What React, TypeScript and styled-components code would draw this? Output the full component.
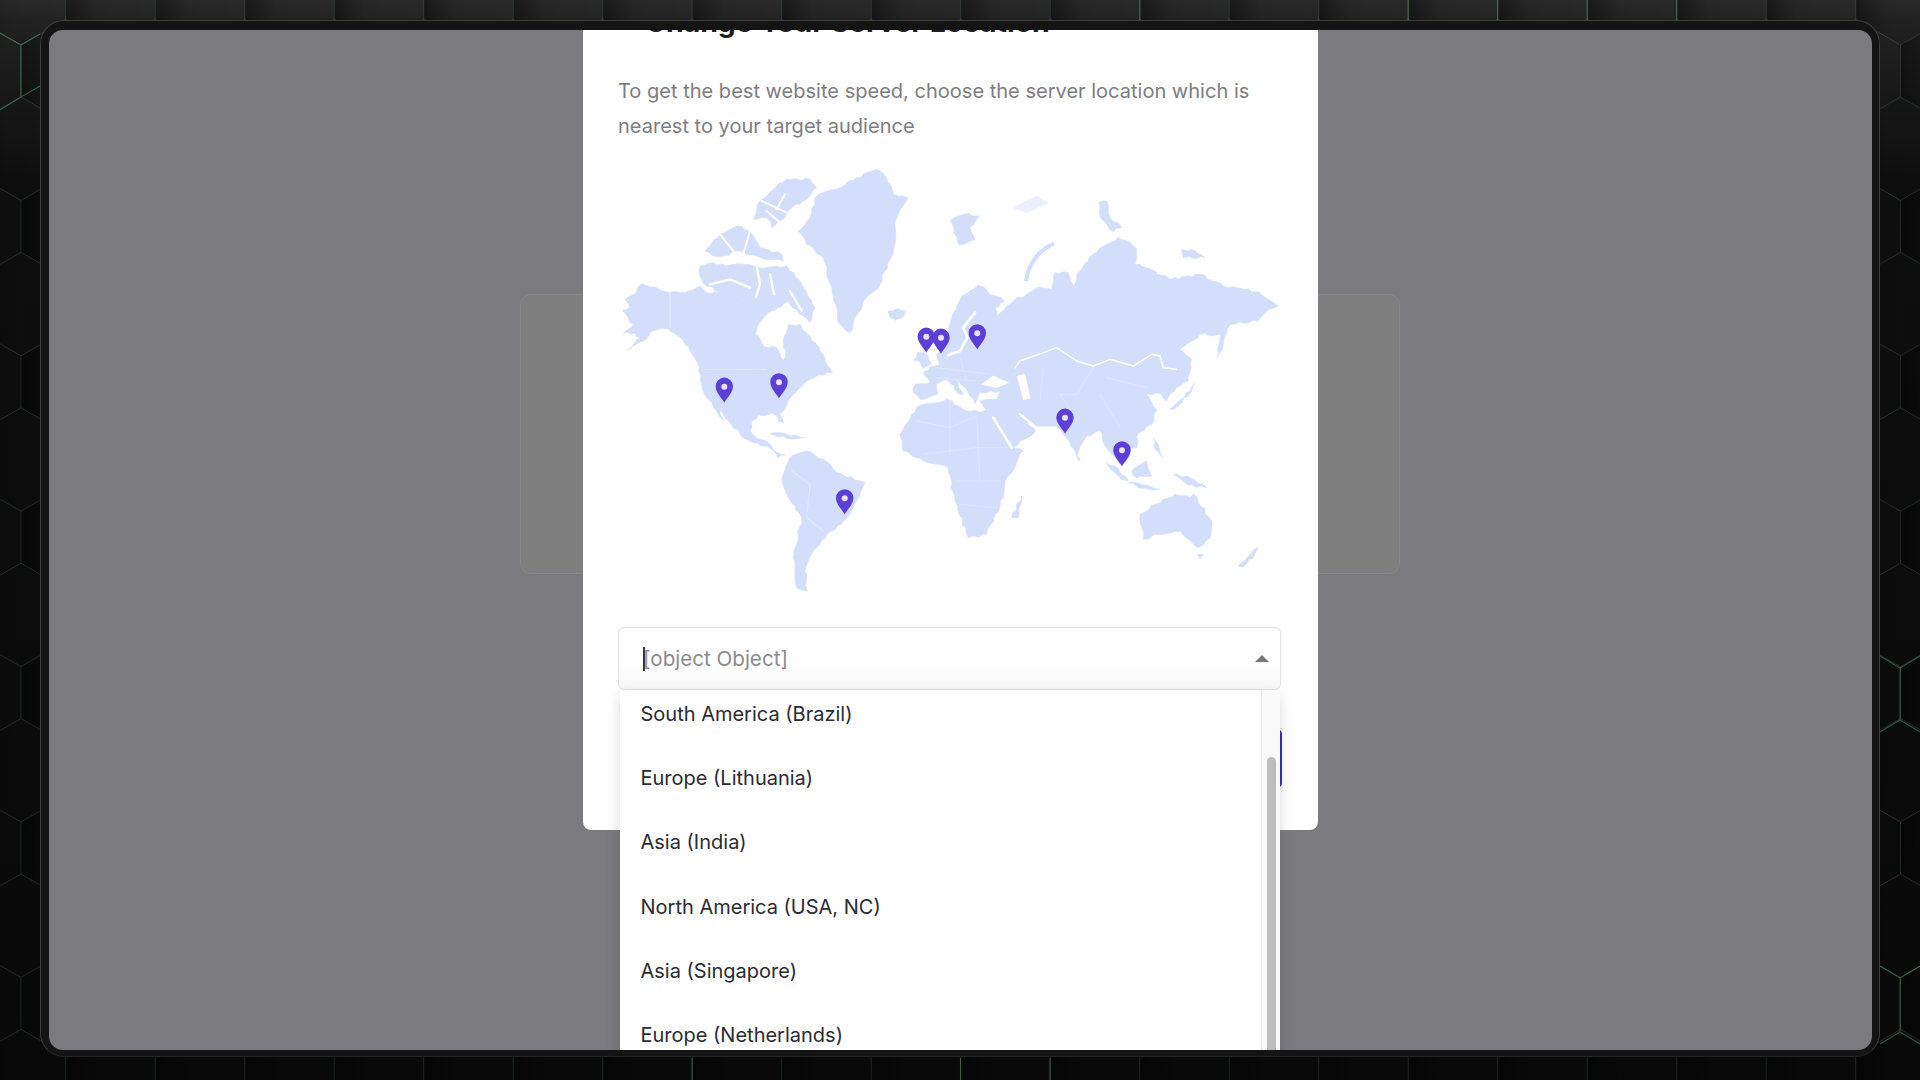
import styled, { createGlobalStyle } from "styled-components";

const FONT = `"Inter", "Liberation Sans", sans-serif`;

const GlobalStyle = createGlobalStyle`
    * { box-sizing: border-box; }
    html, body { margin: 0; height: 100%; background: #0c0c0c; overflow: hidden; }
    body { font-family: ${FONT}; }
`;

const options = [
    "South America (Brazil)",
    "Europe (Lithuania)",
    "Asia (India)",
    "North America (USA, NC)",
    "Asia (Singapore)",
    "Europe (Netherlands)",
];

// tips of the pins, in page pixels (the map's viewBox uses the same numbers)
const pins: [number, number][] = [
    [724.3, 401.7],
    [779, 397.3],
    [844.7, 513.3],
    [926.3, 351.7],
    [941, 352.7],
    [977.3, 348.3],
    [1065, 432.7],
    [1122, 465.3],
];

const HEX_W = 89.5;
const HEX_PITCH = 77.7;
const HEX_SIDE = 52;
const HEX_RISE = 25.7;

const hexCells = () => {
    const cells = [];
    for (let row = -1; row < 14; row++) {
        const y = 45 + HEX_PITCH * row;
        const odd = Math.abs(row) % 2 === 1;
        for (let col = -1; col < 23; col++) {
            const x = 21 + (odd ? HEX_W / 2 : 0) + HEX_W * col;
            const cx = x + HEX_W / 2;
            const d = `M${x} ${y} L${cx} ${y - HEX_RISE} L${x + HEX_W} ${y} L${x + HEX_W} ${y + HEX_SIDE} L${cx} ${y + HEX_SIDE + HEX_RISE} L${x} ${y + HEX_SIDE} Z`;
            cells.push({ d, key: `${row}-${col}` });
        }
    }
    return cells;
};

// the few cell edges that catch the light in the reference
const accentEdges = [
    "M1497.7 0 V20",
    "M1587.2 0 V20",
    "M1676.7 0 V20",
    "M1408.2 0 V20",
    "M1140 0 V20",
    "M692 1058 V1080",
    "M1050 1058 V1080",
    "M960.5 1058 V1080",
    "M21 45 V97 M21 45 L0 33 M21 45 L40 34 M21 97 L0 110 M21 97 L40 86",
    "M1900 668 V720 M1900 668 L1880 656 M1900 668 L1920 656 M1900 720 L1880 732 M1900 720 L1920 732",
    "M1900 978 V1032 M1900 978 L1880 966 M1900 978 L1920 966 M1900 1032 L1880 1044 M1900 1032 L1920 1044",
];

const Backdrop = () => (
    <BackdropSvg viewBox="0 0 1920 1080">
        <defs>
            <linearGradient id="cell" x1="0" x2="1" y1="0" y2="0">
                <stop offset="0" stopColor="#000" stopOpacity="0.4" />
                <stop offset="0.35" stopColor="#000" stopOpacity="0.05" />
                <stop offset="1" stopColor="#000" stopOpacity="0" />
            </linearGradient>
        </defs>
        {hexCells().map((c) => (
            <path key={c.key} d={c.d} fill="url(#cell)" stroke="#8fb8a0" strokeOpacity="0.1" strokeWidth="1" />
        ))}
        <path d={accentEdges.join(" ")} fill="none" stroke="#6fc795" strokeOpacity="0.38" strokeWidth="1.1" />
    </BackdropSvg>
);

// breaks straight polygon edges into short wobbly pieces so the coasts read as coasts
const rough = (d: string) => {
    const n = (d.match(/-?\d+(\.\d+)?/g) || []).map(Number);
    const pts: [number, number][] = [];
    for (let i = 0; i < n.length; i += 2) pts.push([n[i], n[i + 1]]);
    let out = "";
    pts.forEach(([x, y], i) => {
        const [nx, ny] = pts[(i + 1) % pts.length];
        const len = Math.hypot(nx - x, ny - y);
        const steps = Math.max(1, Math.round(len / 14));
        for (let s = 0; s < steps; s++) {
            const t = s / steps;
            const px = x + (nx - x) * t;
            const py = y + (ny - y) * t;
            const a = s === 0 ? 0 : Math.sin(px * 12.9 + py * 78.2) * 3.6;
            const b = s === 0 ? 0 : Math.cos(px * 39.3 + py * 11.1) * 3.6;
            out += `${out ? "L" : "M"}${(px + a).toFixed(1)} ${(py + b).toFixed(1)} `;
        }
    });
    return out + "Z";
};

const Land = ({ d }: { d: string }) => <path d={rough(d)} />;

const americas = [
    "M38 478 L60 468 L45 445 L70 432 L96 398 L135 408 L180 425 L225 425 L270 405 L290 425 L330 425 L365 462 L395 445 L430 440 L425 420 L470 425 L500 405 L520 430 L505 470 L470 490 L445 520 L437 550 L460 585 L500 590 L520 630 L528 600 L520 570 L535 520 L570 520 L600 555 L640 610 L650 640 L668 665 L625 672 L590 690 L565 715 L540 740 L520 780 L510 790 L520 815 L505 810 L495 790 L445 792 L425 810 L420 840 L440 862 L470 870 L490 895 L525 912 L505 920 L470 885 L430 875 L390 850 L355 810 L330 775 L342 812 L320 780 L290 740 L272 690 L268 650 L240 600 L205 555 L175 535 L135 537 L100 570 L55 598 L90 560 L75 545 L40 547 L70 520 L55 500",
    "M515 985 L545 915 L590 900 L640 925 L680 965 L765 995 L740 1050 L700 1110 L650 1150 L610 1200 L585 1260 L592 1320 L562 1312 L550 1220 L575 1100 L530 1030",
    "M565 240 L600 200 L620 135 L680 115 L740 80 L800 55 L830 80 L850 130 L895 140 L860 200 L850 300 L810 400 L760 450 L720 545 L690 520 L670 440 L640 320 L590 280",
    "M430 205 L450 150 L490 115 L530 85 L600 85 L620 110 L590 145 L545 170 L520 205 L485 230 L470 200",
    "M285 300 L330 250 L380 225 L420 240 L450 290 L515 310 L520 330 L450 320 L380 300 L330 320",
    "M270 345 L310 335 L350 345 L400 340 L470 350 L530 345 L570 390 L615 470 L600 515 L560 475 L535 450 L510 470 L470 440 L430 440 L395 445 L365 462 L330 425 L290 405 L270 375",
    "M835 485 L860 475 L885 480 L875 500 L855 508",
    "M480 848 L530 850 L585 860 L530 862",
];

const easternLands = [
    "M132 632 L150 618 L178 612 L170 580 L190 545 L215 470 L245 405 L295 373 L345 405 L375 420 L345 440 L350 465 L400 420 L440 400 L480 378 L515 385 L525 335 L565 335 L580 375 L600 330 L640 280 L715 228 L770 262 L765 310 L800 320 L870 355 L960 340 L1030 375 L1090 385 L1140 395 L1195 435 L1160 450 L1135 480 L1050 490 L1030 525 L960 520 L900 565 L935 595 L925 660 L890 680 L860 720 L830 695 L800 700 L830 745 L815 790 L775 815 L770 860 L735 870 L700 830 L722 915 L680 860 L660 810 L620 825 L590 885 L560 830 L525 795 L470 795 L440 780 L468 810 L400 860 L360 810 L335 770 L300 720 L350 715 L360 690 L300 695 L285 728 L262 690 L225 650 L250 700 L235 698 L200 655 L170 670 L172 700 L122 716 L100 695 L105 670 L150 665 L130 640",
    "M60 820 L110 740 L200 715 L260 750 L330 750 L385 850 L430 870 L375 960 L370 1010 L320 1120 L265 1130 L225 1020 L205 920 L130 900 L70 870",
    "M780 1060 L850 1015 L885 1000 L930 1010 L940 1000 L995 1080 L990 1130 L955 1160 L900 1110 L830 1120 L790 1135",
    "M1075 1215 L1105 1185 L1135 1160 L1120 1190 L1090 1218",
    "M952 1180 L970 1180 L960 1195",
    "M395 1070 L425 1005 L415 1070",
    "M870 745 L930 690 L945 665 L925 705 L880 745",
    "M1010 590 L1020 530 L1050 488 L1030 550",
    "M680 905 L705 915 L745 960 L725 955",
    "M755 930 L800 900 L815 945 L770 950",
    "M745 965 L790 972 L840 985 L780 982",
    "M820 830 L835 850 L850 890 L825 865",
    "M880 940 L930 950 L980 980 L925 972",
    "M590 885 L602 895 L595 900",
    "M100 598 L112 575 L135 575 L155 608 L130 622 L118 600",
    "M212 178 L265 158 L298 165 L270 200 L285 235 L238 252",
    "M655 125 L680 120 L690 170 L725 200 L700 212 L665 175",
    "M905 265 L945 270 L975 290 L910 290",
    "M25 450 L55 442 L75 452 L50 475 L30 470",
];

const WorldMap = () => (
    <MapSvg viewBox="618 160 662 440" aria-label="World map">
        <g transform="translate(610 150) scale(0.33333)" fill="#d3dffa" stroke="#d3dffa" strokeWidth="2" strokeLinejoin="round">
            {americas.map((d) => (
                <Land key={d} d={d} />
            ))}
            <g fill="none" stroke="#fff" strokeLinecap="round">
                <path d="M300 400 L360 385 L420 410 M440 345 L450 400 L438 438 M480 370 L492 430 M540 420 L575 480" strokeWidth="7" />
                <path d="M330 250 L370 300 M420 240 L400 310 M290 320 L380 320 M455 150 L530 185 M470 180 L505 210 M525 130 L500 175" strokeWidth="6" />
                <g strokeWidth="2.5" opacity="0.4">
                    <path d="M285 655 L470 655" />
                    <path d="M180 425 L180 530" />
                    <path d="M545 960 L600 1000 L590 1100 L640 1140" />
                </g>
            </g>
        </g>
        <g transform="translate(880 160) scale(0.33333)" fill="#d3dffa" stroke="#d3dffa" strokeWidth="2" strokeLinejoin="round">
            {easternLands.map((d) => (
                <Land key={d} d={d} />
            ))}
            <path d="M400 140 L420 130 L470 105 L505 125 L440 155 Z" opacity="0.45" />
            <path d="M438 360 Q450 280 522 248" fill="none" strokeWidth="12" />
            <path d="M455 345 Q465 290 515 262" fill="none" stroke="#fff" strokeWidth="4" opacity="0.7" />
            <path d="M305 670 L340 645 L385 665 L350 680 Z" fill="#fff" stroke="#fff" />
            <path d="M412 645 L435 640 L450 712 L430 716 Z" fill="#fff" stroke="#fff" />
            <g fill="none" stroke="#fff" strokeLinecap="round">
                <path d="M205 582 L240 570 L262 530 L250 500 L285 455" strokeWidth="8" />
                <path d="M340 770 L395 860" strokeWidth="8" />
                <path d="M420 760 L465 797" strokeWidth="7" />
                <path d="M405 620 L420 600 L490 575 L530 560 L590 600 L640 615 L690 595 L760 615 L815 580 L840 585 L850 620 L890 625" strokeWidth="4.5" />
                <g strokeWidth="2" opacity="0.3">
                    <path d="M170 620 L330 640 M240 590 L260 660 M170 650 L290 660" />
                    <path d="M490 620 L480 720 M640 620 L590 700 L540 700 L600 790 M680 650 L800 680 M660 700 L720 800" />
                    <path d="M110 780 L210 800 L300 760 M210 720 L210 880 M130 880 L290 860 L380 860 M290 760 L300 960 M225 960 L360 960 M240 1030 L350 1040" />
                </g>
            </g>
        </g>
        {pins.map(([x, y]) => (
            <g key={x} transform={`translate(${x} ${y})`}>
                <path d="M0 0 C-2 -4 -8.7 -10 -8.7 -16.4 A8.7 8.7 0 1 1 8.7 -16.4 C8.7 -10 2 -4 0 0 Z" fill="#5b3fd6" />
                <circle cx="0" cy="-16" r="3" fill="#e9e2f8" />
            </g>
        ))}
    </MapSvg>
);

const App = () => (
    <>
        <GlobalStyle />
        <Page>
            <Backdrop />
            <Frame>
                <Screen>
                    <BehindCard />
                    <Modal>
                        <Title>Change Your Server Location</Title>
                        <Description>
                            To get the best website speed, choose the server location which is nearest to your target audience
                        </Description>
                        <WorldMap />
                        <SelectWrap>
                            <SelectBox>
                                <Placeholder>
                                    <Caret />
                                    [object Object]
                                </Placeholder>
                                <Arrow />
                            </SelectBox>
                            <Dropdown>
                                <OptionList>
                                    {options.map((o) => (
                                        <Option key={o}>{o}</Option>
                                    ))}
                                </OptionList>
                                <ScrollTrack>
                                    <ScrollThumb />
                                </ScrollTrack>
                            </Dropdown>
                        </SelectWrap>
                        <Footer>
                            <ConfirmButton aria-label="Confirm" />
                        </Footer>
                    </Modal>
                </Screen>
            </Frame>
        </Page>
    </>
);

const Page = styled.div`
    position: relative;
    width: 1920px;
    height: 1080px;
    padding: 20px 40px 23px 40px;
    overflow: hidden;
    background: linear-gradient(180deg, #2a2a2a 0, #222 20px, #0e0e0e 180px, #090909 100%);
`;

const BackdropSvg = styled.svg`
    position: absolute;
    inset: 0;
    width: 1920px;
    height: 1080px;
`;

const Frame = styled.div`
    position: relative;
    height: 100%;
    padding: 9px 7px 6px 8px;
    background: #141414;
    border: 1.5px solid #3e3e3e;
    border-bottom-color: #232323;
    border-radius: 24px;
`;

const Screen = styled.div`
    position: relative;
    height: 100%;
    overflow: hidden;
    background: #7b7a7e;
    border-radius: 14px;
    padding-top: 264px;
`;

const BehindCard = styled.div`
    width: 880px;
    height: 280px;
    margin-left: 471px;
    background: #7f7f80;
    border: 1px solid #888889;
    border-radius: 10px;
`;

const Modal = styled.div`
    position: absolute;
    left: 534px;
    bottom: 220px;
    width: 735px;
    padding: 29px 36px 43px 35px;
    background: #fff;
    border-radius: 8px;
`;

const Title = styled.h2`
    margin: 0 0 34px;
    padding-left: 27px;
    font-size: 28.4px;
    line-height: 36px;
    font-weight: 700;
    color: #1c1c22;
`;

const Description = styled.p`
    margin: 0 0 16px;
    font-size: 20.05px;
    line-height: 35.6px;
    color: #7d7d82;
`;

const MapSvg = styled.svg`
    display: block;
    width: 662px;
    height: 440px;
    margin-bottom: 26px;
`;

const SelectWrap = styled.div`
    position: relative;
    z-index: 2;
    margin-right: 1px;
`;

const SelectBox = styled.div`
    display: flex;
    align-items: center;
    justify-content: space-between;
    height: 63px;
    padding: 0 11px 0 24px;
    background: linear-gradient(180deg, #fff 55%, #f7f7f7 100%);
    border: 1px solid #e2e2e2;
    border-radius: 6px;
`;

const Placeholder = styled.span`
    position: relative;
    font-size: 20.6px;
    color: #8b8b8f;
`;

const Caret = styled.span`
    position: absolute;
    left: 0;
    top: 1px;
    bottom: 0;
    width: 1.5px;
    background: #333;
`;

const Arrow = styled.span`
    width: 0;
    height: 0;
    border-left: 7px solid transparent;
    border-right: 7px solid transparent;
    border-bottom: 7px solid #77777a;
`;

const Dropdown = styled.div`
    position: absolute;
    top: 100%;
    left: 2px;
    right: 1px;
    height: 420px;
    display: flex;
    background: #fff;
    box-shadow: 0 6px 14px rgba(0, 0, 0, 0.14);
`;

const OptionList = styled.div`
    flex: 1;
    margin-top: -8.5px;
    overflow: hidden;
`;

const Option = styled.div`
    display: flex;
    align-items: center;
    height: 64.3px;
    padding-left: 20.5px;
    font-size: 20px;
    color: #2b2b33;
`;

const ScrollTrack = styled.div`
    width: 19.5px;
    padding: 67px 4px 0 5px;
    background: #f9f9f9;
    border-left: 1px solid #e9e9e9;
`;

const ScrollThumb = styled.div`
    height: 100%;
    background: #bdbdbd;
    border-radius: 6px 6px 0 0;
`;

const Footer = styled.div`
    display: flex;
    justify-content: flex-end;
    margin: 40px 0.5px 0 0;
`;

const ConfirmButton = styled.button`
    width: 220px;
    height: 57px;
    padding: 0;
    border: none;
    background: #3b2cc4;
    border-radius: 4px;
`;

export default App;
